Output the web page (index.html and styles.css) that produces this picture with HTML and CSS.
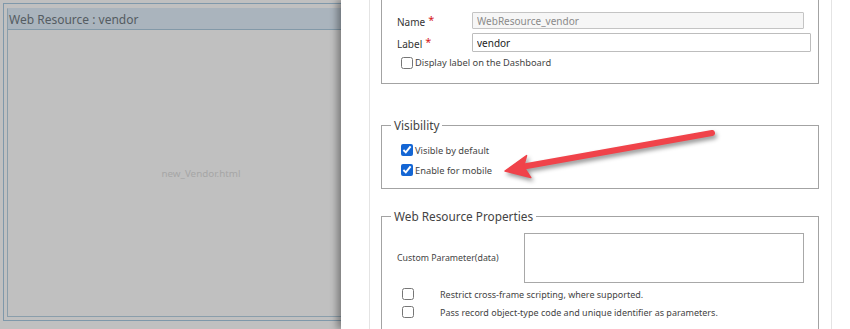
FILE: index.html
```html
<!DOCTYPE html>
<html lang="en">
<head>
<meta charset="utf-8">
<title>Web Resource Properties</title>
<link rel="stylesheet" href="styles.css">
</head>
<body>
<div class="page">
  <div class="frame">
    <div class="wr-box">
      <div class="wr-head">Web Resource : vendor</div>
      <div class="wr-body">new_Vendor.html</div>
    </div>
  </div>
</div>

<div class="dialog">
  <div class="column">
    <fieldset class="group group-cut">
      <div class="field-row">
        <span class="field-label">Name<span class="req">*</span></span>
        <input class="text-input input-name" type="text" value="WebResource_vendor" disabled>
      </div>
      <div class="field-row">
        <span class="field-label">Label<span class="req">*</span></span>
        <input class="text-input input-label" type="text" value="vendor">
      </div>
      <label class="check-row check-row-first"><input type="checkbox">Display label on the Dashboard</label>
    </fieldset>

    <fieldset class="group group-vis">
      <legend>Visibility</legend>
      <label class="check-row"><input type="checkbox" checked>Visible by default</label>
      <label class="check-row"><input type="checkbox" checked>Enable for mobile</label>
    </fieldset>

    <fieldset class="group group-props">
      <legend>Web Resource Properties</legend>
      <div class="param-row">
        <span class="param-label">Custom Parameter(data)</span>
        <textarea class="param-input"></textarea>
      </div>
      <div class="opt-row"><span class="opt-box"><input type="checkbox"></span><span class="opt-text">Restrict cross-frame scripting, where supported.</span></div>
      <div class="opt-row"><span class="opt-box"><input type="checkbox"></span><span class="opt-text">Pass record object-type code and unique identifier as parameters.</span></div>
    </fieldset>
  </div>
</div>

<svg class="arrow" width="850" height="329" viewBox="0 0 850 329" aria-hidden="true">
  <g class="arrow-shape">
    <line x1="712" y1="133" x2="524" y2="166.5" stroke="#f0434a" stroke-width="6" stroke-linecap="round"/>
    <polygon points="505,171 526.6,155.6 523.5,166.5 530.8,177.6" fill="#f0434a" stroke="#f0434a" stroke-width="1.5" stroke-linejoin="round"/>
  </g>
</svg>
</body>
</html>
```

FILE: styles.css
```css
html, body {
  margin: 0;
  padding: 0;
}
body {
  width: 850px;
  height: 329px;
  overflow: hidden;
  position: relative;
  background: #c0c0c0;
  font-family: "Noto Sans", "Open Sans", sans-serif;
  color: #333;
}

/* underlying page (dimmed) */
.page {
  padding: 3px;
}
.frame {
  width: 388px;
  height: 309px;
  border: 1px solid #7f98aa;
  padding: 4px 3px 3px 3px;
}
.wr-box {
  height: 100%;
  box-sizing: border-box;
  border: 1px solid #8a9eab;
  border-top-color: #aab4bd;
  display: flex;
  flex-direction: column;
}
.wr-head {
  height: 20px;
  line-height: 21px;
  background: #aab4bd;
  border-bottom: 1px solid #8399a8;
  padding-left: 1px;
  font-size: 12px;
  color: #555c62;
}
.wr-body {
  flex: 1;
  display: flex;
  align-items: center;
  justify-content: center;
  font-size: 9.8px;
  color: #a6a6a6;
  padding-top: 1px;
}

/* dialog overlay */
.dialog {
  position: absolute;
  left: 341px;
  top: 0;
  width: 509px;
  height: 329px;
  background: #fff;
  box-shadow: -4px 0 7px rgba(0, 0, 0, 0.35);
  padding-left: 28px;
  box-sizing: border-box;
}
.column {
  width: 463px;
  height: 100%;
  box-sizing: border-box;
  border-left: 1px solid #e4e4e4;
  border-right: 1px solid #e4e4e4;
  padding: 0 12px 0 11px;
}

.group {
  margin: 0;
  border: 1px solid #a3a3a3;
  padding: 0 12px 0 15px;
  min-width: 0;
}
.group legend {
  font-size: 11.8px;
  line-height: 18px;
  color: #444;
  padding: 0 3px;
  margin-left: -6px;
}
.group-cut {
  border-top: 0;
  padding-top: 12px;
  padding-bottom: 14px;
}
.field-row {
  display: grid;
  grid-template-columns: 75px 1fr;
  align-items: center;
  margin-bottom: 4px;
}
.field-label {
  font-size: 10px;
  color: #333;
}
.req {
  color: #d51818;
  font-size: 11px;
  margin-left: 3px;
  vertical-align: 2px;
}
.text-input {
  box-sizing: border-box;
  margin: 0;
  font-family: inherit;
  font-size: 10px;
  padding: 0 4px;
  border: 1px solid #c4c4c4;
  border-radius: 1px;
  outline: none;
}
.input-name {
  width: 332px;
  height: 17px;
  background: #f6f6f6;
  color: #8a8a8a;
}
.input-label {
  width: 339px;
  height: 19px;
  background: #fff;
  color: #222;
  border-color: #bdbdbd;
}

.check-row {
  display: flex;
  align-items: center;
  height: 20px;
  font-size: 9.3px;
  color: #444;
}
.check-row input {
  width: 12px;
  height: 12px;
  margin: 0 2px 0 4px;
  accent-color: #1466d4;
}
.check-row-first {
  height: 13px;
}

.group-vis {
  margin-top: 32px;
  padding-top: 6px;
  padding-bottom: 8px;
}

.group-props {
  margin-top: 18px;
  padding-top: 8px;
  padding-bottom: 20px;
}
.param-row {
  display: grid;
  grid-template-columns: 127px 1fr;
  align-items: center;
  margin-bottom: 2px;
}
.param-label {
  font-size: 8.8px;
  color: #444;
}
.param-input {
  box-sizing: border-box;
  width: 280px;
  height: 50px;
  margin: 0;
  border: 1px solid #a8a8a8;
  resize: none;
  display: block;
}
.opt-row {
  display: grid;
  grid-template-columns: 43px 1fr;
  align-items: center;
  height: 18px;
}
.opt-box {
  display: flex;
  align-items: center;
}
.opt-box input {
  width: 12px;
  height: 12px;
  margin: 0 0 0 5px;
}
.opt-text {
  font-size: 9px;
  color: #444;
}

.arrow {
  position: absolute;
  left: 0;
  top: 0;
  pointer-events: none;
}
.arrow-shape {
  filter: drop-shadow(2px 3px 2px rgba(0, 0, 0, 0.4));
}
```
